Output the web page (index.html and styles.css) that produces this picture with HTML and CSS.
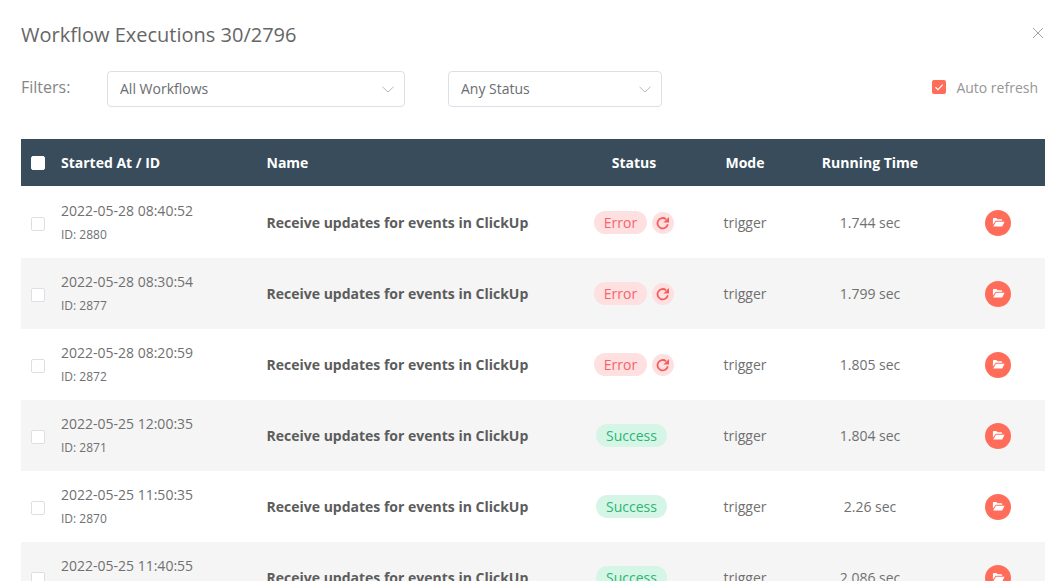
FILE: index.html
```html
<!DOCTYPE html>
<html lang="en">
<head>
<meta charset="utf-8">
<title>Workflow Executions</title>
<link rel="stylesheet" href="styles.css">
</head>
<body>
<div class="dialog">
  <header class="title-bar">
    <h1 class="title">Workflow Executions 30/2796</h1>
    <svg class="close" viewBox="0 0 12 12"><path d="M1 1l10 10M11 1L1 11"/></svg>
  </header>
  <div class="filters">
    <span class="filters-label">Filters:</span>
    <div class="select select-wf"><span>All Workflows</span><svg class="chev" viewBox="0 0 12 7"><path d="M.5.8L6 6l5.500-5.200"/></svg></div>
    <div class="select select-status"><span>Any Status</span><svg class="chev" viewBox="0 0 12 7"><path d="M.5.8L6 6l5.500-5.200"/></svg></div>
    <label class="auto"><span class="check-on"><svg viewBox="0 0 14 14"><path d="M3.500 7.200l2.500 2.400 4.700-4.900"/></svg></span>Auto refresh</label>
  </div>
  <div class="table">
    <div class="row head">
      <span class="cell-check"><span class="box box-head"></span></span>
      <span>Started At / ID</span>
      <span>Name</span>
      <span class="c">Status</span>
      <span class="c">Mode</span>
      <span class="c">Running Time</span>
      <span></span>
    </div>

    <div class="row">
      <span class="cell-check"><span class="box"></span></span>
      <div class="when"><div class="date">2022-05-28 08:40:52</div><div class="id">ID: 2880</div></div>
      <div class="name">Receive updates for events in ClickUp</div>
      <div class="status"><span class="pill err">Error</span><span class="retry"><svg viewBox="0 0 14 14"><path d="M11.800 8.300A5.200 5.200 0 1 1 10 3.200"/><path class="fill" d="M13 1v5.600H7.400z"/></svg></span></div>
      <div class="c mode">trigger</div>
      <div class="c time">1.744 sec</div>
      <div class="action"><span class="open"><svg viewBox="0 0 14 11"><path d="M1 2.200C1 1.500 1.500 1 2.200 1h2.500l1.300 1.300h4c.6 0 1 .4 1 1V4H4L1 8z"/><path d="M4.300 5H13.500L11 10H1.300z"/></svg></span></div>
    </div>
    <div class="row">
      <span class="cell-check"><span class="box"></span></span>
      <div class="when"><div class="date">2022-05-28 08:30:54</div><div class="id">ID: 2877</div></div>
      <div class="name">Receive updates for events in ClickUp</div>
      <div class="status"><span class="pill err">Error</span><span class="retry"><svg viewBox="0 0 14 14"><path d="M11.800 8.300A5.200 5.200 0 1 1 10 3.200"/><path class="fill" d="M13 1v5.600H7.400z"/></svg></span></div>
      <div class="c mode">trigger</div>
      <div class="c time">1.799 sec</div>
      <div class="action"><span class="open"><svg viewBox="0 0 14 11"><path d="M1 2.200C1 1.500 1.500 1 2.200 1h2.500l1.300 1.300h4c.6 0 1 .4 1 1V4H4L1 8z"/><path d="M4.300 5H13.500L11 10H1.300z"/></svg></span></div>
    </div>
    <div class="row">
      <span class="cell-check"><span class="box"></span></span>
      <div class="when"><div class="date">2022-05-28 08:20:59</div><div class="id">ID: 2872</div></div>
      <div class="name">Receive updates for events in ClickUp</div>
      <div class="status"><span class="pill err">Error</span><span class="retry"><svg viewBox="0 0 14 14"><path d="M11.800 8.300A5.200 5.200 0 1 1 10 3.200"/><path class="fill" d="M13 1v5.600H7.400z"/></svg></span></div>
      <div class="c mode">trigger</div>
      <div class="c time">1.805 sec</div>
      <div class="action"><span class="open"><svg viewBox="0 0 14 11"><path d="M1 2.200C1 1.500 1.500 1 2.200 1h2.500l1.300 1.300h4c.6 0 1 .4 1 1V4H4L1 8z"/><path d="M4.300 5H13.500L11 10H1.300z"/></svg></span></div>
    </div>
    <div class="row">
      <span class="cell-check"><span class="box"></span></span>
      <div class="when"><div class="date">2022-05-25 12:00:35</div><div class="id">ID: 2871</div></div>
      <div class="name">Receive updates for events in ClickUp</div>
      <div class="status"><span class="pill ok">Success</span></div>
      <div class="c mode">trigger</div>
      <div class="c time">1.804 sec</div>
      <div class="action"><span class="open"><svg viewBox="0 0 14 11"><path d="M1 2.200C1 1.500 1.500 1 2.200 1h2.500l1.300 1.300h4c.6 0 1 .4 1 1V4H4L1 8z"/><path d="M4.300 5H13.500L11 10H1.300z"/></svg></span></div>
    </div>
    <div class="row">
      <span class="cell-check"><span class="box"></span></span>
      <div class="when"><div class="date">2022-05-25 11:50:35</div><div class="id">ID: 2870</div></div>
      <div class="name">Receive updates for events in ClickUp</div>
      <div class="status"><span class="pill ok">Success</span></div>
      <div class="c mode">trigger</div>
      <div class="c time">2.26 sec</div>
      <div class="action"><span class="open"><svg viewBox="0 0 14 11"><path d="M1 2.200C1 1.500 1.500 1 2.200 1h2.500l1.300 1.300h4c.6 0 1 .4 1 1V4H4L1 8z"/><path d="M4.300 5H13.500L11 10H1.300z"/></svg></span></div>
    </div>
    <div class="row">
      <span class="cell-check"><span class="box"></span></span>
      <div class="when"><div class="date">2022-05-25 11:40:55</div><div class="id">ID: 2869</div></div>
      <div class="name">Receive updates for events in ClickUp</div>
      <div class="status"><span class="pill ok">Success</span></div>
      <div class="c mode">trigger</div>
      <div class="c time">2.086 sec</div>
      <div class="action"><span class="open"><svg viewBox="0 0 14 11"><path d="M1 2.200C1 1.500 1.500 1 2.200 1h2.500l1.300 1.300h4c.6 0 1 .4 1 1V4H4L1 8z"/><path d="M4.300 5H13.500L11 10H1.300z"/></svg></span></div>
    </div>
  </div>
</div>
</body>
</html>
```
FILE: styles.css
```css
html, body {
  margin: 0;
  height: 581px;
  overflow: hidden;
  background: #fff;
}
body {
  font-family: "Open Sans", sans-serif;
  color: #555;
}
.dialog {
  padding: 20px 0 0 21px;
}
.title-bar {
  display: flex;
  justify-content: space-between;
  align-items: flex-start;
  height: 51px;
  padding-right: 1px;
}
.title {
  margin: 0;
  font-size: 20px;
  font-weight: 400;
  line-height: 29px;
  color: #666;
}
.close {
  width: 12px;
  height: 12px;
  margin-top: 7px;
}
.close path {
  fill: none;
  stroke: #a3a3a3;
  stroke-width: 1;
}
.filters {
  display: flex;
  align-items: flex-start;
  height: 68px;
  padding-right: 7px;
  font-size: 14px;
}
.filters-label {
  width: 86px;
  font-size: 16px;
  line-height: 32px;
  color: #858585;
}
.select {
  box-sizing: border-box;
  height: 36px;
  display: flex;
  align-items: center;
  justify-content: space-between;
  padding: 0 10px 2px 12px;
  border: 1px solid #dcdfe6;
  border-radius: 4px;
  color: #6a6c70;
}
.select-wf {
  width: 298px;
  margin-right: 43px;
}
.select-status {
  width: 214px;
}
.chev {
  width: 12px;
  height: 7px;
  margin-top: 2px;
}
.chev path {
  fill: none;
  stroke: #b4b8bf;
  stroke-width: 1;
}
.auto {
  margin-left: auto;
  display: flex;
  align-items: center;
  gap: 10px;
  height: 32px;
  font-size: 14px;
  color: #969696;
}
.check-on {
  width: 14px;
  height: 14px;
  border-radius: 2px;
  background: #ff6d5a;
  display: block;
}
.check-on svg {
  display: block;
  width: 14px;
  height: 14px;
  fill: none;
  stroke: #fff;
  stroke-width: 1.200;
}
.table {
  width: 1024px;
}
.row {
  display: grid;
  grid-template-columns: 40px 205.500px 297.500px 140px 82px 168px 88px;
  align-items: center;
  height: 71px;
  font-size: 14px;
}
.row:nth-child(odd) {
  background: #f5f5f5;
}
.row.head {
  height: 47px;
  margin-bottom: 1px;
  background: #384c5c;
  color: #fff;
  font-weight: 700;
}
.c {
  text-align: center;
}
.cell-check {
  display: flex;
  padding: 2px 0 0 10px;
}
.head .cell-check {
  padding-top: 0;
}
.box {
  box-sizing: border-box;
  width: 14px;
  height: 14px;
  border: 1px solid #dcdfe6;
  border-radius: 2px;
  background: #fff;
}
.box-head {
  border-color: #fff;
}
.date {
  line-height: 20px;
  color: #707070;
  position: relative;
  top: -1px;
}
.id {
  font-size: 12px;
  line-height: 16px;
  margin-top: 5px;
  color: #707070;
}
.name {
  font-weight: 700;
  color: #5c5c5c;
}
.status {
  display: flex;
  justify-content: center;
  align-items: center;
  gap: 5px;
}
.pill {
  display: block;
  height: 23px;
  line-height: 23px;
  border-radius: 12px;
  padding: 0 10px;
}
.err {
  background: #fee0e0;
  color: #f7636a;
}
.ok {
  background: #d5f5e6;
  color: #2cb673;
  padding: 0 10.500px;
  margin-right: 5px;
}
.retry {
  width: 22px;
  height: 22px;
  border-radius: 50%;
  background: #fee0e0;
  display: flex;
  align-items: center;
  justify-content: center;
}
.retry svg {
  width: 14px;
  height: 14px;
}
.retry path {
  fill: none;
  stroke: #f55d5d;
  stroke-width: 1.800;
}
.retry path.fill {
  fill: #f55d5d;
  stroke: none;
}
.mode, .time {
  color: #707070;
}
.action {
  display: flex;
  justify-content: center;
}
.open {
  width: 26px;
  height: 26px;
  border-radius: 50%;
  background: #ff6d5a;
  display: flex;
  align-items: center;
  justify-content: center;
}
.open svg {
  width: 13px;
  height: 10.500px;
  fill: #fff;
}
```
